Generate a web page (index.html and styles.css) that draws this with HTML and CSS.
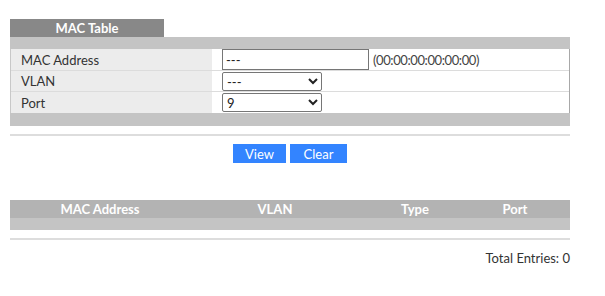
FILE: index.html
```html
<!DOCTYPE html>
<html>
<head>
<meta charset="utf-8">
<link rel="stylesheet" href="styles.css">
</head>
<body>
<div class="page">
  <div class="tab">MAC Table</div>
  <div class="bar"></div>
  <div class="form">
    <div class="row">
      <div class="label">MAC Address</div>
      <div class="field">
        <input class="text" type="text" value="---">
        <span class="hint">(00:00:00:00:00:00)</span>
      </div>
    </div>
    <div class="row mid">
      <div class="label">VLAN</div>
      <div class="field">
        <select class="sel"><option>---</option></select>
      </div>
    </div>
    <div class="row last">
      <div class="label">Port</div>
      <div class="field">
        <select class="sel"><option>9</option></select>
      </div>
    </div>
  </div>
  <div class="bar bottom"></div>
  <div class="rule first"></div>
  <div class="buttons">
    <button class="btn view">View</button>
    <button class="btn clear">Clear</button>
  </div>
  <div class="thead">
    <div class="th c1">MAC Address</div>
    <div class="th c2">VLAN</div>
    <div class="th c3">Type</div>
    <div class="th c4">Port</div>
  </div>
  <div class="tempty"></div>
  <div class="rule second"></div>
  <div class="total">Total Entries: 0</div>
</div>
</body>
</html>
```

FILE: styles.css
```css
html, body {
  margin: 0;
  padding: 0;
  background: #fff;
}
body {
  font-family: "Lato", "Liberation Sans", sans-serif;
  font-size: 13px;
  color: #333;
}
.page {
  width: 560px;
  margin-left: 10px;
  padding-top: 19px;
}
.tab {
  width: 154px;
  height: 18px;
  line-height: 18px;
  background: #888888;
  color: #fff;
  font-weight: bold;
  text-align: center;
  font-size: 13px;
}
.bar {
  height: 12px;
  background: #c4c4c4;
}
.bar.bottom {
  height: 13px;
}
.form {
  border-left: 1px solid #c8c8c8;
  border-right: 1px solid #a8a8a8;
}
.row {
  display: flex;
  height: 21px;
  border-bottom: 1px solid #dcdcdc;
}
.row.mid {
  height: 20px;
}
.row.last {
  border-bottom: none;
  height: 21px;
}
.label {
  width: 191px;
  background: #ececec;
  padding-left: 10px;
  display: flex;
  align-items: center;
}
.field {
  flex: 1;
  display: flex;
  align-items: center;
  padding-left: 10px;
  gap: 4px;
}
.text {
  box-sizing: border-box;
  width: 147px;
  height: 21px;
  border: 1px solid #767676;
  border-radius: 0;
  padding: 0 3px;
  margin: 0;
  font-family: "Lato", "Liberation Sans", sans-serif;
  font-size: 13px;
  color: #222;
}
.hint {
  color: #444;
  letter-spacing: -0.4px;
}
.sel {
  box-sizing: border-box;
  width: 100px;
  height: 19px;
  margin: 0;
  font-family: "Lato", "Liberation Sans", sans-serif;
  font-size: 13px;
  color: #222;
  border: 1px solid #767676;
  border-radius: 2px;
  background: #fff;
}
.rule {
  height: 2px;
  background: #dddddd;
}
.rule.first {
  margin-top: 8px;
}
.buttons {
  display: flex;
  justify-content: center;
  gap: 4px;
  margin-top: 8px;
}
.btn {
  height: 19px;
  border: none;
  background: #3384ff;
  color: #fff;
  font-family: "Lato", "Liberation Sans", sans-serif;
  font-size: 13px;
  padding: 0;
  margin: 0;
}
.btn.view { width: 53px; }
.btn.clear { width: 57px; }
.thead {
  display: flex;
  margin-top: 37px;
  height: 18px;
  background: #b3b3b3;
}
.th {
  color: #fff;
  font-weight: bold;
  text-align: center;
  line-height: 18px;
}
.c1 { width: 180px; }
.c2 { width: 170px; }
.c3 { width: 110px; }
.c4 { width: 90px; }
.tempty {
  height: 12px;
  background: #c4c4c4;
}
.rule.second {
  margin-top: 8px;
}
.total {
  text-align: right;
  margin-top: 10px;
  line-height: 16px;
}
```
